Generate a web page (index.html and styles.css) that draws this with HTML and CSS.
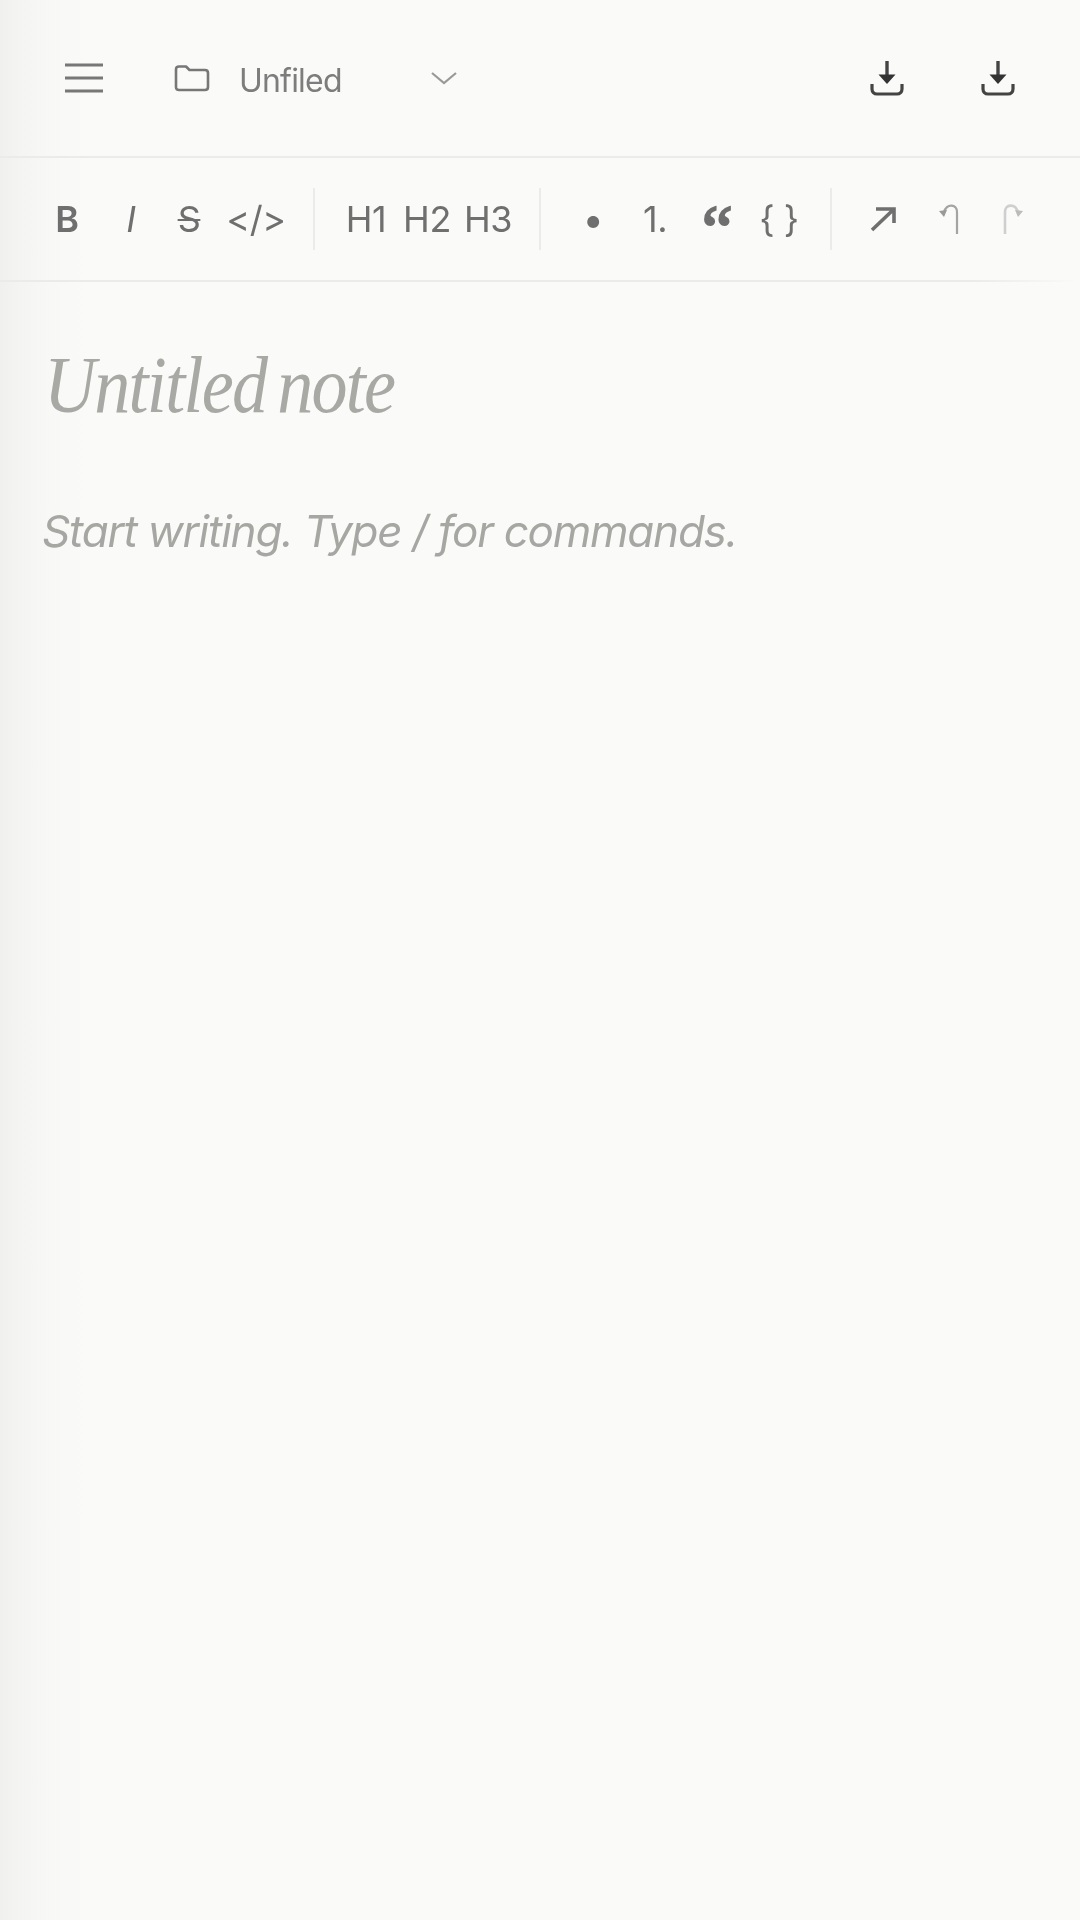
FILE: index.html
```html
<!DOCTYPE html>
<html lang="en">
<head>
    <meta charset="UTF-8">
    <meta name="viewport" content="width=device-width, initial-scale=1.0">
    <title>Untitled note</title>
    <link rel="stylesheet" href="styles.css">
</head>
<body>
    <div class="topbar">
        <button class="menu-btn" aria-label="Menu">
            <svg width="40" height="30" viewBox="0 0 40 30"><path d="M1 2H39M1 15H39M1 28H39" fill="none" stroke="#777" stroke-width="3"/></svg>
        </button>
        <div class="folder">
            <svg width="36" height="28" viewBox="0 0 36 28"><path d="M2 5.5C2 3.5 3 2.5 5 2.5H12L15.5 6H31C33 6 34 7 34 9V23C34 25 33 26 31 26H5C3 26 2 25 2 23Z" fill="none" stroke="#777" stroke-width="2.6" stroke-linejoin="round"/></svg>
            <span class="folder-name">Unfiled</span>
            <svg class="chevron" width="28" height="14" viewBox="0 0 28 14"><path d="M2 2L14 12L26 2" fill="none" stroke="#999" stroke-width="2.2"/></svg>
        </div>
        <div class="actions">
            <button class="action-btn" aria-label="Export">
                <svg width="36" height="36" viewBox="0 0 36 36"><path d="M18 1V17" stroke="#444" stroke-width="3.4"/><path d="M9.5 14.5H26.5L18 24Z" fill="#333"/><path d="M3 24V29C3 32 5 34 8 34H28C31 34 33 32 33 29V24" fill="none" stroke="#444" stroke-width="3.2"/></svg>
            </button>
            <button class="action-btn" aria-label="Download">
                <svg width="36" height="36" viewBox="0 0 36 36"><path d="M18 1V17" stroke="#444" stroke-width="3.4"/><path d="M9.5 14.5H26.5L18 24Z" fill="#333"/><path d="M3 24V29C3 32 5 34 8 34H28C31 34 33 32 33 29V24" fill="none" stroke="#444" stroke-width="3.2"/></svg>
            </button>
        </div>
    </div>

    <div class="toolbar">
        <div class="tool-group">
            <button class="tool tool-bold">B</button>
            <button class="tool tool-italic">I</button>
            <button class="tool tool-strike">S</button>
            <button class="tool tool-code">&lt;/&gt;</button>
        </div>
        <div class="tool-sep"></div>
        <div class="tool-group">
            <button class="tool">H1</button>
            <button class="tool">H2</button>
            <button class="tool">H3</button>
        </div>
        <div class="tool-sep"></div>
        <div class="tool-group tool-group-wide">
            <button class="tool tool-bullet">•</button>
            <button class="tool">1.</button>
            <button class="tool tool-quote">“</button>
            <button class="tool">{ }</button>
        </div>
        <div class="tool-sep"></div>
        <div class="tool-group tool-group-wide">
            <button class="tool" aria-label="Link">
                <svg width="28" height="28" viewBox="0 0 28 28"><path d="M3 25L24 5M7 4H25V18" fill="none" stroke="#6f6f6f" stroke-width="3.6"/></svg>
            </button>
            <button class="tool tool-undo" aria-label="Undo">
                <svg width="24" height="36" viewBox="0 0 24 36"><path d="M20 33V11C20 3 10 2 7 11" fill="none" stroke="#a4a4a4" stroke-width="2.2"/><path d="M2 10L10 9L7 16Z" fill="#999"/></svg>
            </button>
            <button class="tool" aria-label="Redo">
                <svg width="24" height="36" viewBox="0 0 24 36"><path d="M6 33V11C6 3 16 2 19 11" fill="none" stroke="#cfcfcf" stroke-width="2.6"/><path d="M24 10L16 9L19 16Z" fill="#bbb"/></svg>
            </button>
        </div>
    </div>

    <div class="editor">
        <h1 class="note-title">Untitled note</h1>
        <p class="note-placeholder">Start writing. Type / for commands.</p>
    </div>
</body>
</html>
```

FILE: styles.css
```css
* {
    box-sizing: border-box;
}
html, body {
    height: 100%;
}
body {
    margin: 0;
    font-family: Inter, "Liberation Sans", sans-serif;
    background-color: #fafaf8;
    background-image: linear-gradient(to right, #f0f0ef 0, #f4f4f3 20px, #f8f8f6 50px, #fafaf8 90px);
}
button {
    border: none;
    background: none;
    padding: 0;
    font-family: inherit;
    color: inherit;
    display: flex;
    align-items: center;
    justify-content: center;
}
/* the whole capture is slightly soft */
.topbar, .toolbar, .editor {
    filter: blur(0.6px);
}
.topbar {
    height: 158px;
    display: flex;
    align-items: center;
    padding: 0 64px 0 64px;
    border-bottom: 2px solid #ebebe9;
}
.menu-btn {
    width: 40px;
    margin-right: 70px;
}
.folder {
    display: flex;
    align-items: center;
}
.folder-name {
    font-size: 32px;
    letter-spacing: -0.8px;
    color: #7d7d7d;
    width: 191px;
    margin-left: 29px;
    padding-top: 4px;
}
.actions {
    margin-left: auto;
    display: flex;
    gap: 75px;
}
.action-btn {
    width: 36px;
}
.toolbar {
    height: 124px;
    display: flex;
    align-items: center;
    padding: 0 0 2px 36px;
    color: #6f6f6f;
    background: linear-gradient(to right, #ebebe9 90%, #fafaf8 100%) bottom / 100% 2px no-repeat;
}
.tool-group {
    display: flex;
    gap: 1px;
}
.tool-group-wide {
    gap: 2px;
}
.tool {
    width: 60px;
    height: 64px;
    font-size: 36px;
    letter-spacing: -0.4px;
}
.tool-bold {
    width: 62px;
    margin-right: 5px;
    font-weight: 600;
}
.tool-italic {
    width: 54px;
    font-style: italic;
}
.tool-strike {
    text-decoration: line-through;
    text-decoration-thickness: 1.5px;
}
.tool-code {
    width: 72px;
}
.tool-bullet {
    margin-left: 1px;
    font-size: 38px;
}
.tool-quote {
    font-family: "Liberation Serif", serif;
    font-size: 70px;
    padding-top: 23px;
    -webkit-text-stroke: 2px #6f6f6f;
}
.tool-undo {
    margin-left: 4px;
}
.tool-sep {
    width: 2px;
    height: 62px;
    margin: 0 21px;
    background-color: #ebebe9;
}
.editor {
    padding: 0 43px;
}
.note-title {
    margin: 57px 0 0 1px;
    font-family: "Liberation Serif", serif;
    font-style: italic;
    font-weight: 400;
    font-size: 80px;
    line-height: 92px;
    letter-spacing: -1.9px;
    word-spacing: -6px;
    color: #a8a9a5;
    transform: scaleX(0.9);
    transform-origin: left;
}
.note-placeholder {
    margin: 72px 0 0 -1px;
    font-size: 44px;
    line-height: 56px;
    font-style: italic;
    letter-spacing: -1.25px;
    color: #a6a7a3;
}
```
